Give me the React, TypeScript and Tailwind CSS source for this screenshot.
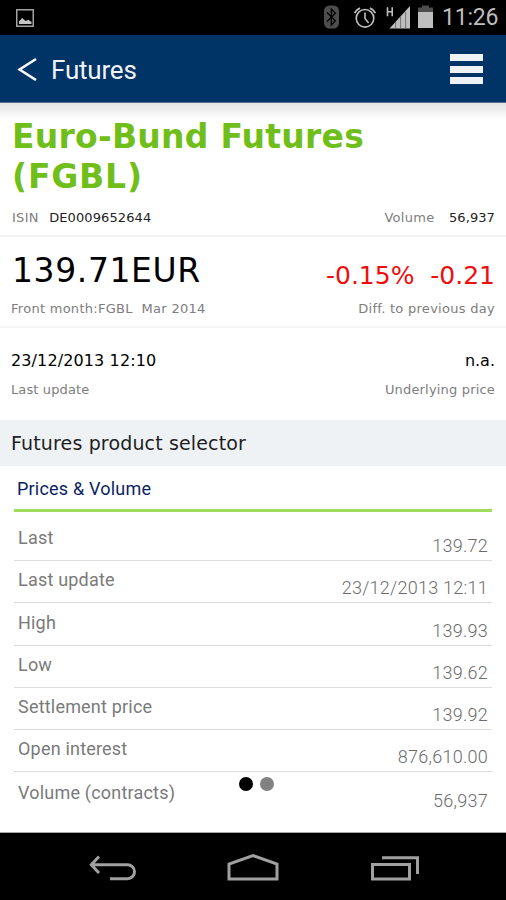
import React from 'react';

interface PriceRow {
  label: string;
  value: string;
}

const priceRows: PriceRow[] = [
  { label: 'Last', value: '139.72' },
  { label: 'Last update', value: '23/12/2013 12:11' },
  { label: 'High', value: '139.93' },
  { label: 'Low', value: '139.62' },
  { label: 'Settlement price', value: '139.92' },
  { label: 'Open interest', value: '876,610.00' },
  { label: 'Volume (contracts)', value: '56,937' },
];

function StatusBar() {
  return (
    <div className="flex h-[35px] shrink-0 items-center justify-between bg-black pl-4 pr-[9px]">
      <svg width="18" height="18" viewBox="0 0 18 18">
        <rect x="0.75" y="0.75" width="16.5" height="16.5" fill="none" stroke="#a3a3a3" strokeWidth="1.5" />
        <path d="M3 15v-3l1.5-1L6 9l2 1.5L9.5 12l3-1.2L14 12l1.5.8V15z" fill="#c4c4c4" />
      </svg>
      <div className="flex h-full items-center">
        <svg width="110" height="35" viewBox="324 0 110 35">
          {/* Bluetooth */}
          <rect x="324" y="5.5" width="15" height="23" rx="5.5" fill="#4d4d4d" />
          <path d="M327 12.5l8.3 8.3-4 4.2V9l4 4.2-8.3 8.3" fill="none" stroke="#000" strokeWidth="1.3" />
          {/* Alarm */}
          <g fill="none" stroke="#bebebe">
            <circle cx="365" cy="18.3" r="8.8" strokeWidth="1.6" />
            <path d="M365 12.5v6l3.6 4.4" strokeWidth="1.6" />
            <path d="M354.6 13.2q1.6-3.6 5.4-5M375.4 13.2q-1.6-3.6-5.4-5" strokeWidth="1.9" />
          </g>
          {/* Signal */}
          <path d="M387.5 7.2v9M392.2 7.2v9M387.5 11.7h4.7" fill="none" stroke="#bebebe" strokeWidth="1.6" />
          <path d="M389.5 28.5L410 6v22.5z" fill="#bebebe" />
          <path d="M395.6 22v6.5M400.6 17v11.5M405.6 12v16.5" stroke="#6a6a6a" strokeWidth="0.9" />
          {/* Battery */}
          <path d="M422 5.5h7v2h4v5h-15v-5h4z" fill="#4d4d4d" />
          <path d="M418 12h15v16h-15z" fill="#bebebe" />
        </svg>
        <span className="ml-2 w-[55px] whitespace-nowrap text-right text-[23px] leading-[37px] tracking-[-0.2px] text-[#bebebe]">
          11:26
        </span>
      </div>
    </div>
  );
}

function Header() {
  return (
    <div className="flex h-[68px] shrink-0 items-center justify-between border-b border-[#5c6f91] bg-[#003366] pl-[17px] pr-[23px]">
      <div className="flex items-center">
        <svg width="20" height="24" viewBox="0 0 20 24">
          <path d="M19 2L2.6 12.5 19 23" fill="none" stroke="#f5f7fa" strokeWidth="2.6" />
        </svg>
        <span className="ml-[14px] pt-0.5 text-[26px] leading-[34px] tracking-[-0.2px] text-[#f0f3f6]">Futures</span>
      </div>
      <div className="flex flex-col gap-1 pt-px">
        <div className="mb-px h-[7px] w-[33px] bg-[#f0f3f6]" />
        <div className="h-[7px] w-[33px] bg-[#f0f3f6]" />
        <div className="h-[7px] w-[33px] bg-[#f0f3f6]" />
      </div>
    </div>
  );
}

function Summary() {
  return (
    <div className="shrink-0 font-['DejaVu_Sans',sans-serif] text-[13px] leading-5 tracking-[0.28px] text-[#7d7d7d]">
      <div className="h-[134px] border-b-2 border-[#f4f4f4] bg-linear-to-b from-[#e2e2e2] to-white to-[16px] px-[11px] pt-[14px]">
        <h1 className="pl-px text-[33px] font-bold leading-10 tracking-[0.25px] text-[#6fbe19]">
          Euro-Bund Futures
          <br />
          <span className="tracking-[0.8px]">(FGBL)</span>
        </h1>
        <div className="mt-[11px] flex justify-between">
          <div className="pl-px">
            ISIN <span className="ml-[6px] tracking-[0.1px] text-[#222]">DE0009652644</span>
          </div>
          <div>
            Volume <span className="ml-[10px] tracking-[0.1px] text-[#222]">56,937</span>
          </div>
        </div>
      </div>

      <div className="flex h-[91px] justify-between border-b-2 border-[#f4f4f4] px-[11px] pt-[14px]">
        <div>
          <div className="pl-px text-[33px] leading-10 tracking-[0.6px] text-black">139.71EUR</div>
          <div className="mt-2 whitespace-pre">Front month:FGBL  Mar 2014</div>
        </div>
        <div className="pt-[5px] text-right">
          <div className="whitespace-pre text-[25px] leading-10 tracking-normal text-[#f00d0d]">-0.15%  -0.21</div>
          <div className="mt-[3px]">Diff. to previous day</div>
        </div>
      </div>

      <div className="flex h-[92px] justify-between px-[11px] pt-[21px]">
        <div>
          <div className="text-[16px] leading-6 tracking-[0.12px] text-black">23/12/2013 12:10</div>
          <div className="mt-[7px] tracking-[0.12px]">Last update</div>
        </div>
        <div className="text-right">
          <div className="text-[16px] leading-6 tracking-normal text-black">n.a.</div>
          <div className="mt-[7px] tracking-[0.18px]">Underlying price</div>
        </div>
      </div>

      <div className="h-[46px] bg-[#eef2f5] px-[11px] text-[19px] leading-[47px] tracking-[0.15px] text-[#1f1f1f]">
        Futures product selector
      </div>
    </div>
  );
}

function PriceTable() {
  return (
    <div className="h-[366px] shrink-0 px-[14px] text-[18px] leading-5 tracking-[0.2px] text-[#7a7a7a]">
      <div className="h-[46px] border-b-[3px] border-[#9fdc5d] pl-[3px] leading-[45px] text-[#0b1f66]">Prices &amp; Volume</div>
      <div className="h-[7px]" />
      {priceRows.map((row) => (
        <div
          key={row.label}
          className="flex h-[42.2px] justify-between border-b border-[#dcdcdc] px-[4px] pt-[9.3px] last:h-11 last:border-0 last:pt-[11px]"
        >
          <span>{row.label}</span>
          <span className="pt-2 font-[350] tracking-[0.25px] text-[#6c6c6c]">{row.value}</span>
        </div>
      ))}
    </div>
  );
}

function NavBar() {
  return (
    <div className="flex h-[68px] shrink-0 justify-center border-t border-[#a8a8a8] bg-black">
      <svg width="506" height="67" viewBox="0 833 506 67" fill="none" stroke="#a0a0a0" strokeWidth="3">
        <path d="M91 864.7h36.5a7 7 0 0 1 0 14H110M99 856.5l-7.7 8.2 7.7 8.3" />
        <path d="M229 879V864l24-8.4 24 8.4v15z" />
        <path d="M372.5 864.5h37V879h-37zM382 857.7h35.5V874" />
      </svg>
    </div>
  );
}

function App() {
  return (
    <div className="flex h-[900px] w-[506px] flex-col overflow-hidden bg-white font-[Roboto,sans-serif]">
      <StatusBar />
      <Header />
      <Summary />
      <div className="relative">
        <PriceTable />
        {/* Page indicator floats over the last row */}
        <div className="absolute left-[239px] top-[310.5px] flex gap-[7px]">
          <div className="h-[14px] w-[14px] rounded-full bg-black" />
          <div className="h-[14px] w-[14px] rounded-full bg-[#828282]" />
        </div>
      </div>
      <NavBar />
    </div>
  );
}

export default App;
